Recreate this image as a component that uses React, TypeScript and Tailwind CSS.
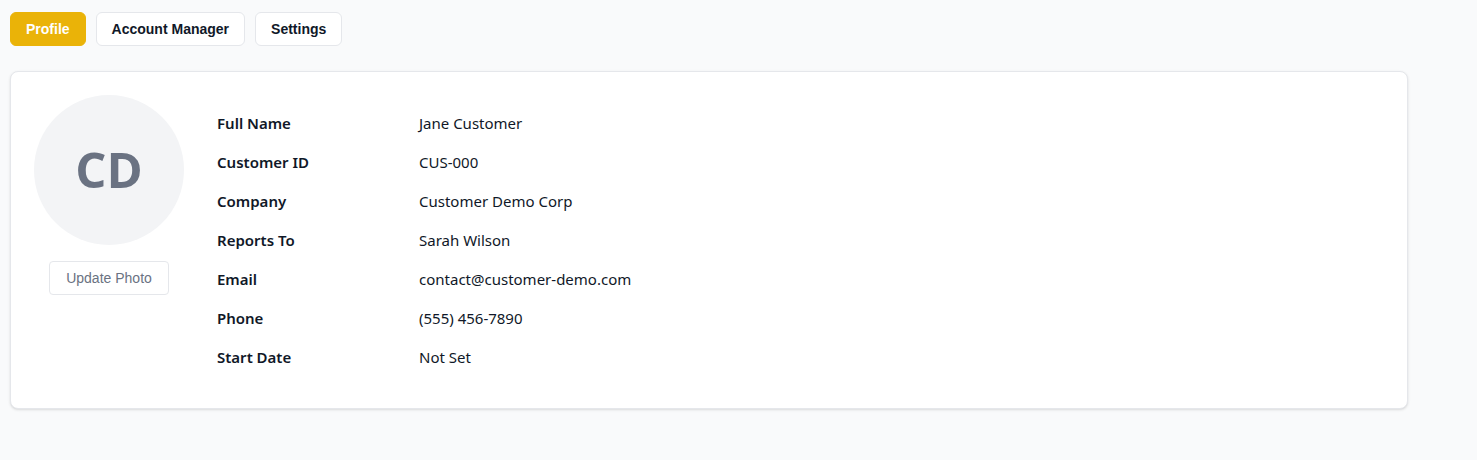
import { JSX } from 'react';

const fields: { label: string; value: string }[] = [
  { label: 'Full Name', value: 'Jane Customer' },
  { label: 'Customer ID', value: 'CUS-000' },
  { label: 'Company', value: 'Customer Demo Corp' },
  { label: 'Reports To', value: 'Sarah Wilson' },
  { label: 'Email', value: 'contact@customer-demo.com' },
  { label: 'Phone', value: '(555) 456-7890' },
  { label: 'Start Date', value: 'Not Set' },
];

const tabs = ['Profile', 'Account Manager', 'Settings'];

function App(): JSX.Element {
  return (
    <div className="min-h-[460px] bg-[#f9fafb] px-[10px] pt-3 font-['Liberation_Sans',Arial,sans-serif]">
      <div className="flex gap-[10px]">
        {tabs.map((tab, i) => (
          <button
            key={tab}
            className={
              i === 0
                ? 'h-[34px] rounded-md border border-[#eab308] bg-[#eab308] px-[15px] text-sm font-bold text-white'
                : 'h-[34px] rounded-md border border-gray-200 bg-white px-[15px] text-sm font-bold text-gray-900'
            }
          >
            {tab}
          </button>
        ))}
      </div>

      <div className="mt-[25px] w-[1398px] rounded-lg border border-gray-200 bg-white p-[23px] shadow-sm">
        <div className="flex">
          <div className="flex w-[150px] flex-col items-center">
            <div className="flex h-[150px] w-[150px] items-center justify-center rounded-full bg-gray-100">
              <span className="font-['Open_Sans',sans-serif] text-[49px] font-bold text-gray-500">CD</span>
            </div>
            <button className="mt-4 h-[34px] w-[120px] rounded border border-gray-200 bg-white text-sm text-gray-500">
              Update Photo
            </button>
          </div>

          <div className="ml-[33px] flex flex-col pt-[9px] pb-[8px] font-['Noto_Sans',sans-serif] text-[15px] text-gray-900">
            {fields.map((f) => (
              <div key={f.label} className="flex h-[39px] items-center">
                <span className="w-[202px] font-semibold">{f.label}</span>
                <span>{f.value}</span>
              </div>
            ))}
          </div>
        </div>
      </div>
    </div>
  );
}

export default App;
